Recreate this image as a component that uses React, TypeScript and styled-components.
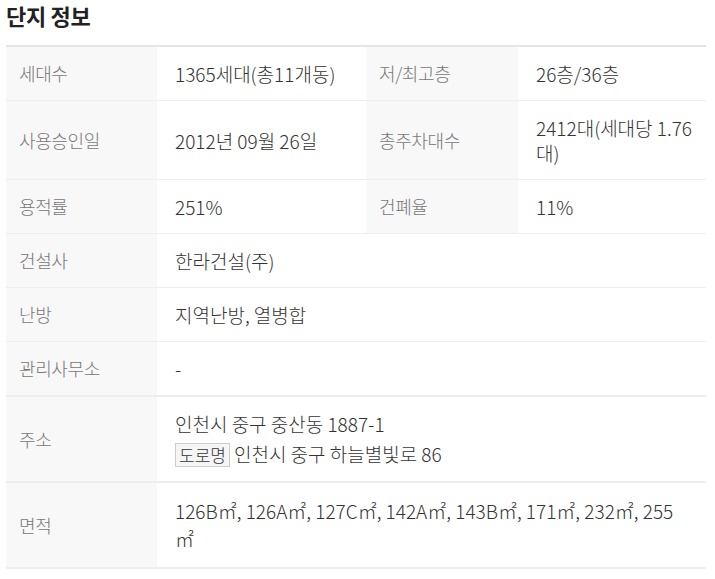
import React from 'react'
import styled, { createGlobalStyle } from 'styled-components'

const GlobalStyle = createGlobalStyle`
    body {
        margin: 0;
        background: #fff;
        font-family: 'Noto Sans CJK KR', 'Noto Sans', sans-serif;
    }
`

const Section = styled.section`
    padding: 0 9px 0 6px;
`

const Title = styled.h2`
    margin: 0;
    padding-top: 2px;
    height: 43px;
    font-size: 22px;
    font-weight: 700;
    line-height: 26px;
    color: #222;
    letter-spacing: -0.3px;
`

const Table = styled.table`
    width: 700px;
    border-collapse: collapse;
    table-layout: fixed;
    border-top: 2px solid #e5e5e5;
`

const Row = styled.tr<{ $thick?: boolean }>`
    border-bottom: ${(p) => (p.$thick ? '2px solid #eeeeee' : '1px solid #eeeeee')};
`

const Label = styled.th`
    padding: 14px 10px 14px 13px;
    background: #f8f8f8;
    color: #777;
    font-size: 18px;
    font-weight: 300;
    line-height: 25px;
    letter-spacing: -0.4px;
    text-align: left;
    vertical-align: middle;
`

const Value = styled.td<{ $tall?: boolean }>`
    padding: 14px ${(p) => (p.$tall ? '18px' : '8px')} 14px 18px;
    color: #333;
    font-size: 19px;
    font-weight: 300;
    line-height: ${(p) => (p.$tall ? '28px' : '25px')};
    vertical-align: middle;
`

const AddressLine = styled.div`
    & + & {
        margin-top: 5px;
    }
`

const RoadBadge = styled.span`
    display: inline-block;
    margin-right: 4px;
    padding: 0 3px;
    border: 1px solid #ccc;
    background: #f5f5f5;
    font-size: 17px;
    line-height: 22px;
    color: #333;
`

const pairs = [
    ['세대수', '1365세대(총11개동)', '저/최고층', '26층/36층'],
    ['사용승인일', '2012년 09월 26일', '총주차대수', '2412대(세대당\u00a01.76 대)'],
    ['용적률', '251%', '건폐율', '11%'],
]

export default function App() {
    return (
        <Section>
            <GlobalStyle />
            <Title>단지 정보</Title>
            <Table>
                <colgroup>
                    <col style={{ width: 151 }} />
                    <col style={{ width: 209 }} />
                    <col style={{ width: 152 }} />
                    <col style={{ width: 188 }} />
                </colgroup>
                <tbody>
                    {pairs.map((p) => (
                        <Row key={p[0]}>
                            <Label>{p[0]}</Label>
                            <Value>{p[1]}</Value>
                            <Label>{p[2]}</Label>
                            <Value>{p[3]}</Value>
                        </Row>
                    ))}
                    <Row>
                        <Label>건설사</Label>
                        <Value colSpan={3}>한라건설(주)</Value>
                    </Row>
                    <Row>
                        <Label>난방</Label>
                        <Value colSpan={3}>지역난방, 열병합</Value>
                    </Row>
                    <Row $thick>
                        <Label>관리사무소</Label>
                        <Value colSpan={3}>-</Value>
                    </Row>
                    <Row $thick>
                        <Label>주소</Label>
                        <Value colSpan={3}>
                            <AddressLine>인천시 중구 중산동 1887-1</AddressLine>
                            <AddressLine>
                                <RoadBadge>도로명</RoadBadge>인천시 중구 하늘별빛로 86
                            </AddressLine>
                        </Value>
                    </Row>
                    <Row $thick>
                        <Label>면적</Label>
                        <Value colSpan={3} $tall>
                            126B㎡, 126A㎡, 127C㎡, 142A㎡, 143B㎡, 171㎡, 232㎡, 255㎡
                        </Value>
                    </Row>
                </tbody>
            </Table>
        </Section>
    )
}
